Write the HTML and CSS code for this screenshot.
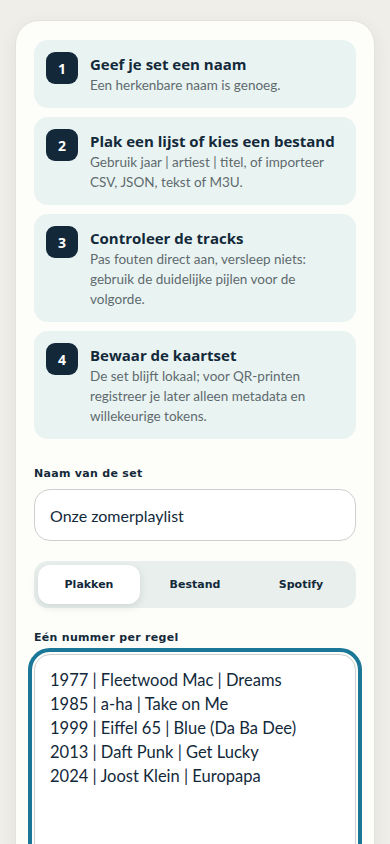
FILE: index.html
```html
<!DOCTYPE html>
<html lang="nl">
<head>
<meta charset="utf-8">
<meta name="viewport" content="width=device-width, initial-scale=1">
<title>Nieuwe set</title>
<link rel="stylesheet" href="styles.css">
</head>
<body>
<main class="card">
  <ol class="steps">
    <li class="step">
      <span class="badge">1</span>
      <div class="step-body">
        <h3 class="step-title">Geef je set een naam</h3>
        <p class="step-desc">Een herkenbare naam is genoeg.</p>
      </div>
    </li>
    <li class="step">
      <span class="badge">2</span>
      <div class="step-body">
        <h3 class="step-title">Plak een lijst of kies een bestand</h3>
        <p class="step-desc">Gebruik jaar | artiest | titel, of importeer CSV, JSON, tekst of M3U.</p>
      </div>
    </li>
    <li class="step">
      <span class="badge">3</span>
      <div class="step-body">
        <h3 class="step-title">Controleer de tracks</h3>
        <p class="step-desc">Pas fouten direct aan, versleep niets: gebruik de duidelijke pijlen voor de volgorde.</p>
      </div>
    </li>
    <li class="step">
      <span class="badge">4</span>
      <div class="step-body">
        <h3 class="step-title">Bewaar de kaartset</h3>
        <p class="step-desc">De set blijft lokaal; voor QR-printen registreer je later alleen metadata en willekeurige tokens.</p>
      </div>
    </li>
  </ol>

  <label class="field-label" for="setname">Naam van de set</label>
  <input class="text-input" id="setname" type="text" value="Onze zomerplaylist">

  <div class="tabs" role="tablist">
    <button class="tab active" role="tab">Plakken</button>
    <button class="tab" role="tab">Bestand</button>
    <button class="tab" role="tab">Spotify</button>
  </div>

  <label class="field-label area-label" for="tracks">Eén nummer per regel</label>
  <div class="area-wrap">
    <textarea class="tracks" id="tracks" rows="9">1977 | Fleetwood Mac | Dreams
1985 | a-ha | Take on Me
1999 | Eiffel 65 | Blue (Da Ba Dee)
2013 | Daft Punk | Get Lucky
2024 | Joost Klein | Europapa</textarea>
  </div>
</main>
</body>
</html>
```

FILE: styles.css
```css
* { box-sizing: border-box; }
html, body { margin: 0; padding: 0; }
body {
  background: #efeee9;
  font-family: "Open Sans", "Noto Sans", sans-serif;
  color: #13293a;
  padding: 20px 15px 0;
}
.card {
  background: #fdfdf9;
  border: 1px solid #e3e2dc;
  border-radius: 24px;
  box-shadow: 0 6px 18px rgba(60, 60, 40, 0.08);
  padding: 19px 18px 40px;
}
.steps {
  list-style: none;
  margin: 0;
  padding: 0;
  display: flex;
  flex-direction: column;
  gap: 9px;
}
.step {
  background: #e9f4f2;
  border-radius: 14px;
  padding: 12px 12px 13px;
  display: flex;
  gap: 12px;
  align-items: flex-start;
}
.badge {
  flex: 0 0 32px;
  width: 32px;
  height: 32px;
  border-radius: 9px;
  background: #13293a;
  color: #fff;
  font-weight: 700;
  font-size: 14px;
  display: flex;
  align-items: center;
  justify-content: center;
}
.step-body { padding-top: 2px; }
.step-title {
  margin: 0;
  font-size: 15px;
  line-height: 20px;
  font-weight: 700;
  color: #13293a;
}
.step-desc {
  margin: 1px 0 0;
  font-family: "Lato", "Open Sans", sans-serif;
  font-size: 13.5px;
  line-height: 20px;
  color: #5f6a6e;
}
.field-label {
  display: block;
  font-family: "DejaVu Sans", sans-serif;
  font-weight: 700;
  font-size: 11px;
  letter-spacing: 0.3px;
  color: #13293a;
  margin: 28px 0 9px;
}
.text-input {
  display: block;
  width: 100%;
  height: 52px;
  border: 1px solid #cdd0d0;
  border-radius: 16px;
  background: #fff;
  padding: 0 15px;
  font-family: "Lato", "Open Sans", sans-serif;
  font-size: 16px;
  color: #13293a;
}
.tabs {
  margin-top: 20px;
  background: #e8efed;
  border-radius: 14px;
  padding: 4px;
  display: grid;
  grid-template-columns: repeat(3, 1fr);
  gap: 4px;
}
.tab {
  border: 0;
  background: transparent;
  height: 39px;
  border-radius: 12px;
  font-family: "DejaVu Sans", sans-serif;
  font-weight: 700;
  font-size: 11px;
  color: #13293a;
  cursor: pointer;
}
.tab.active {
  background: #fff;
  box-shadow: 0 3px 8px rgba(30, 50, 60, 0.12);
}
.field-label.area-label { margin: 23px 0 4px; }
.area-wrap {
  border: 4px solid #1a7797;
  border-radius: 22px;
  padding: 2px;
  margin: 0 -6px;
}
.tracks {
  display: block;
  width: 100%;
  height: 220px;
  border: 1px solid #cdd0d0;
  border-radius: 16px;
  background: #fff;
  padding: 13px 15px 11px;
  font-family: "Lato", "Open Sans", sans-serif;
  font-size: 16.5px;
  line-height: 24px;
  color: #13293a;
  resize: none;
  outline: none;
}
```
